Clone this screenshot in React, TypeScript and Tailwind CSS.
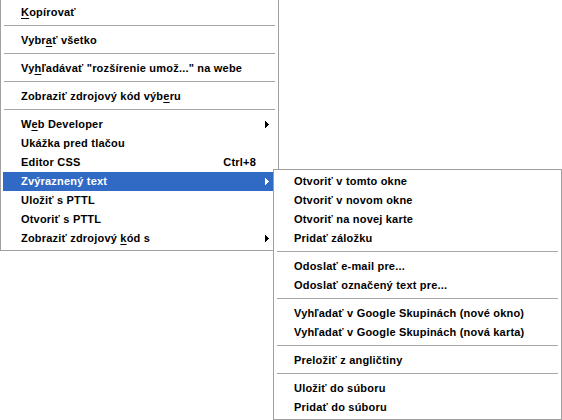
import React from "react";

type Item =
  | { type: "sep" }
  | {
      type: "item";
      label: React.ReactNode;
      shortcut?: string;
      sub?: boolean;
      active?: boolean;
    };

const U = ({ children }: { children: React.ReactNode }) => (
  <span className="underline underline-offset-[2px] decoration-1">{children}</span>
);

const Arrow = ({ white }: { white?: boolean }) => (
  <svg width="4" height="7" viewBox="0 0 4 7" className="ml-auto block" shapeRendering="crispEdges">
    <g fill={white ? "#ffffff" : "#000000"}>
      <rect x="0" y="0" width="1" height="7" />
      <rect x="1" y="1" width="1" height="5" />
      <rect x="2" y="2" width="1" height="3" />
      <rect x="3" y="3" width="1" height="1" />
    </g>
  </svg>
);

const mainItems: Item[] = [
  { type: "item", label: <><U>K</U>opírovať</> },
  { type: "sep" },
  { type: "item", label: <>Vybr<U>a</U>ť všetko</> },
  { type: "sep" },
  { type: "item", label: <>Vy<U>h</U>ľadávať "rozšírenie umož..." na webe</> },
  { type: "sep" },
  { type: "item", label: <>Zobraziť zdrojový kód výb<U>e</U>ru</> },
  { type: "sep" },
  { type: "item", label: <>W<U>e</U>b Developer</>, sub: true },
  { type: "item", label: "Ukážka pred tlačou" },
  { type: "item", label: "Editor CSS", shortcut: "Ctrl+8" },
  { type: "item", label: "Zvýraznený text", sub: true, active: true },
  { type: "item", label: "Uložiť s PTTL" },
  { type: "item", label: "Otvoriť s PTTL" },
  { type: "item", label: <>Zobraziť zdrojový <U>k</U>ód s</>, sub: true },
];

const subItems: Item[] = [
  { type: "item", label: "Otvoriť v tomto okne" },
  { type: "item", label: "Otvoriť v novom okne" },
  { type: "item", label: "Otvoriť na novej karte" },
  { type: "item", label: "Pridať záložku" },
  { type: "sep" },
  { type: "item", label: "Odoslať e-mail pre..." },
  { type: "item", label: "Odoslať označený text pre..." },
  { type: "sep" },
  { type: "item", label: "Vyhľadať v Google Skupinách (nové okno)" },
  { type: "item", label: "Vyhľadať v Google Skupinách (nová karta)" },
  { type: "sep" },
  { type: "item", label: "Preložiť z angličtiny" },
  { type: "sep" },
  { type: "item", label: "Uložiť do súboru" },
  { type: "item", label: "Pridať do súboru" },
];

function Menu({ items }: { items: Item[] }) {
  return (
    <div className="flex flex-col">
      {items.map((it, i) =>
        it.type === "sep" ? (
          <div key={i} className="h-[9px] pt-[3px] px-[1px]">
            <div className="h-px w-full bg-[#a7a7a7]" />
          </div>
        ) : (
          <div
            key={i}
            className={
              "h-[19px] flex items-center pl-[18px] pr-[7px] whitespace-nowrap " +
              (it.active ? "bg-[#316ac5] text-white" : "text-black")
            }
          >
            <span>{it.label}</span>
            {it.shortcut && <span className="ml-auto mr-[13px]">{it.shortcut}</span>}
            {it.sub && <Arrow white={it.active} />}
          </div>
        )
      )}
    </div>
  );
}

export default function App() {
  return (
    <div
      className="relative w-[562px] h-[420px] bg-white overflow-hidden text-[11px] font-bold leading-none tracking-[0.2px]"
      style={{ fontFamily: '"Liberation Sans", Arial, sans-serif' }}
    >
      <div className="absolute left-0 top-0 w-[279px] bg-white border border-t-0 border-[#a0a0a0] px-[2px] pt-[3px] pb-[2px]">
        <Menu items={mainItems} />
      </div>
      <div className="absolute left-[273px] top-[169px] w-[289px] bg-white border border-[#a0a0a0] px-[2px] py-[2px]">
        <Menu items={subItems} />
      </div>
    </div>
  );
}
